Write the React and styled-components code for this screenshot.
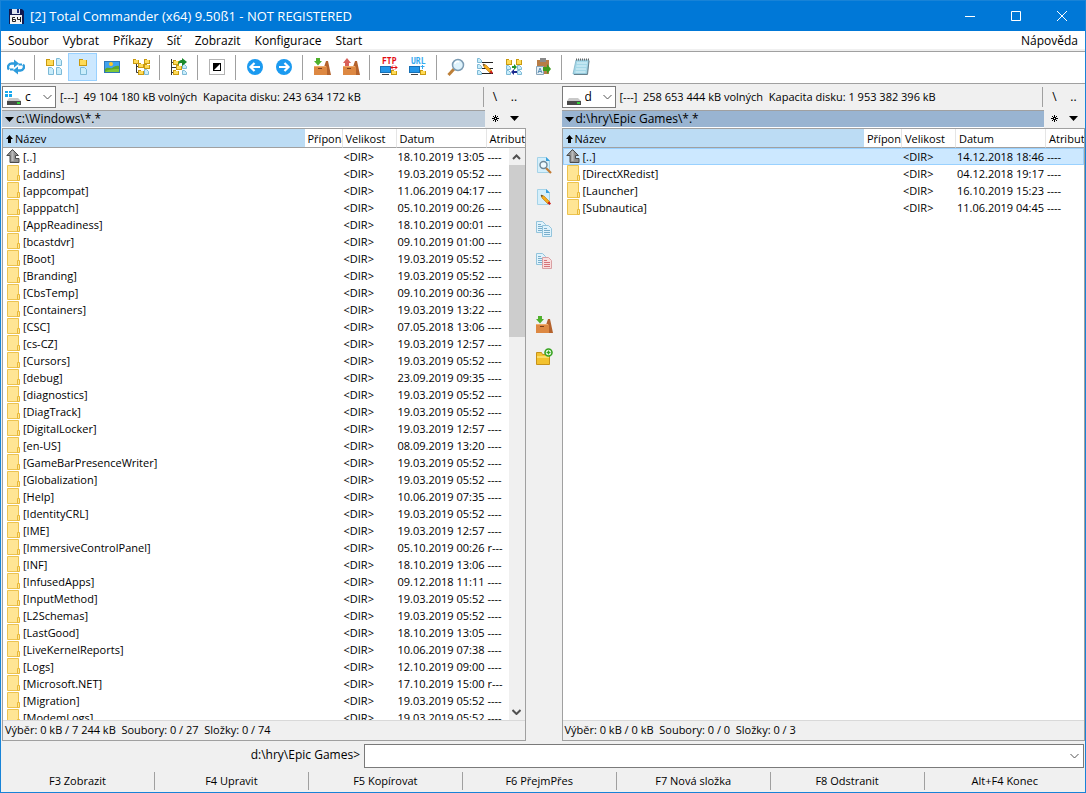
import React from "react";
import styled, { createGlobalStyle, css } from "styled-components";

const c = {
  accent: "#0078d7",
  frame: "#1883d7",
  face: "#f0f0f0",
  line: "#a0a0a0",
  soft: "#d9d9d9",
  head: "#bcdcf4",
  pick: "#cce8ff",
  pickLine: "#99d1ff",
};

const GlobalStyle = createGlobalStyle`
  *, *::before, *::after { box-sizing: border-box; }
  body {
    margin: 0;
    background: ${c.face};
    color: #000;
    font: 11px/16px "Open Sans", "Noto Sans", sans-serif;
  }
  button, input, select {
    font: inherit;
    color: inherit;
    margin: 0;
    padding: 0;
    border: 0;
    background: none;
    border-radius: 0;
  }
  svg { display: block; flex: none; }
`;

const Window = styled.div`
  height: 100vh;
  min-height: 400px;
  display: flex;
  flex-direction: column;
  border: 1px solid ${c.frame};
  overflow: hidden;
`;

/* Title bar */
const TitleBar = styled.header`
  flex: none;
  height: 30px;
  display: flex;
  align-items: center;
  gap: 5px;
  padding-left: 7px;
  background: ${c.accent};
  color: #fff;
`;
const Title = styled.h1`
  flex: 1;
  margin: 0;
  font-size: 13px;
  line-height: 16px;
  font-weight: 400;
  white-space: nowrap;
`;
const Captions = styled.div`
  display: flex;
`;
const CaptionButton = styled.button`
  width: 46px;
  height: 30px;
  display: grid;
  place-items: center;
`;

/* Menu */
const MenuBar = styled.nav`
  flex: none;
  height: 20px;
  display: flex;
  background: #fff;
  border-bottom: 2px solid ${c.face};
`;
const MenuItem = styled.button`
  padding: 2px 7px 0;
  font-size: 12px;
  line-height: 16px;
  margin-left: ${(p) => (p.$end ? "auto" : 0)};
`;

/* Toolbar */
const Toolbar = styled.div`
  flex: none;
  display: flex;
  padding: 1px 0 2px;
  background: #fff;
  border-top: 1px solid ${c.line};
  border-bottom: 1px solid ${c.line};
`;
const ToolButton = styled.button`
  width: 29px;
  height: 28px;
  display: grid;
  place-items: center;
  ${(p) =>
    p.$active &&
    css`
      background: ${c.pick};
      border: 1px solid ${c.pickLine};
    `}
`;
const ToolSeparator = styled.span`
  width: 1px;
  margin: 2px 4px 1px;
  background: ${c.line};
`;

/* Panels */
const Main = styled.main`
  flex: 1;
  min-height: 0;
  display: grid;
  grid-template-columns: minmax(0, 1fr) 36px minmax(0, 1fr);
  padding-left: 1px;
`;
const Panel = styled.section`
  display: flex;
  flex-direction: column;
  min-width: 0;
  min-height: 0;
`;
const DriveRow = styled.div`
  flex: none;
  height: 26px;
  display: flex;
  align-items: center;
`;
const DriveBox = styled.label`
  position: relative;
  flex: none;
  width: 54px;
  height: 22px;
  background: #fff;
  border: 1px solid #7a7a7a;
`;
const DriveSelect = styled.select`
  appearance: none;
  width: 100%;
  height: 20px;
  padding-left: 22px;
  font-size: 12px;
  outline: 0;
`;
const DriveGlyph = styled.span`
  position: absolute;
  top: 3px;
  left: 2px;
  pointer-events: none;
`;
const DriveChevron = styled.span`
  position: absolute;
  top: 7px;
  right: 3px;
  pointer-events: none;
`;
const DriveInfo = styled.span`
  flex: 1;
  min-width: 0;
  padding-left: 4px;
  overflow: hidden;
  white-space: pre;
`;
const SideButtons = styled.div`
  flex: none;
  width: ${(p) => (p.$ruled ? "43px" : "41px")};
  height: ${(p) => (p.$ruled ? "20px" : "16px")};
  margin-left: ${(p) => (p.$ruled ? "-2px" : 0)};
  padding-left: ${(p) => (p.$ruled ? "2px" : "1px")};
  border-left: ${(p) => (p.$ruled ? `1px solid ${c.line}` : "0")};
  display: flex;
`;
const SideButton = styled.button`
  width: 19px;
  display: grid;
  place-items: center;
  font-size: 12px;
`;
const PathRow = styled.div`
  flex: none;
  display: flex;
  height: 18px;
`;
const PathBar = styled.button`
  flex: 1;
  min-width: 0;
  display: flex;
  align-items: center;
  gap: 2px;
  padding-left: 3px;
  background: ${(p) => (p.$active ? "#99b4d1" : "#bfcddb")};
  border-top: 1px solid ${c.line};
  border-bottom: 1px solid #fff;
  font-size: 12px;
  line-height: 16px;
  white-space: nowrap;
`;
const ListFrame = styled.div`
  flex: 1;
  min-height: 0;
  display: flex;
  flex-direction: column;
  border: 1px solid ${c.line};
  background: #fff;
`;
const ListArea = styled.div`
  position: relative;
  flex: 1;
  min-height: 0;
  overflow: hidden;
`;
const Table = styled.table`
  width: 100%;
  table-layout: fixed;
  border-collapse: separate;
  border-spacing: 0;
`;
const Col = styled.col`
  width: ${(p) => p.$w || "auto"};
`;
const HeadCell = styled.th`
  height: 19px;
  padding: 2px 0 0 3px;
  overflow: hidden;
  line-height: 16px;
  font-weight: 400;
  text-align: left;
  white-space: nowrap;
  background: ${(p) => (p.$sorted ? c.head : "#fff")};
  border-bottom: 1px solid ${c.line};
  border-right: ${(p) => (p.$plain ? "0" : "1px solid #e5e5e5")};
`;
const HeadLabel = styled.span`
  display: flex;
  align-items: center;
  gap: 2px;
`;
const Row = styled.tr`
  ${(p) =>
    p.$selected &&
    css`
      background: ${c.pick};
      outline: 1px solid ${c.pickLine};
      outline-offset: -1px;
    `}
`;
const Cell = styled.td`
  height: 17px;
  padding: 0 0 0 1px;
  line-height: 17px;
  white-space: nowrap;
`;
const NameCell = styled(Cell)`
  padding-left: 3px;
  overflow: hidden;
`;
const FileName = styled.span`
  display: flex;
  align-items: center;
  gap: 3px;
  height: 17px;
`;
const ScrollBar = styled.div`
  position: absolute;
  top: 19px;
  right: 0;
  bottom: 0;
  width: 16px;
  display: flex;
  flex-direction: column;
  background: ${c.face};
`;
const ScrollButton = styled.button`
  flex: none;
  height: 17px;
  display: grid;
  place-items: center;
`;
const ScrollTrack = styled.div`
  flex: 1;
`;
const ScrollThumb = styled.div`
  height: 32%;
  background: #cdcdcd;
`;
const StatusLine = styled.div`
  flex: none;
  height: 20px;
  padding-left: 2px;
  overflow: hidden;
  background: ${c.face};
  border-top: 1px solid ${c.soft};
  line-height: 18px;
  white-space: pre;
`;

/* Middle button strip */
const Strip = styled.div`
  display: flex;
  flex-direction: column;
  align-items: center;
  padding-top: 65px;
`;
const StripButton = styled.button`
  width: 32px;
  height: 32px;
  display: grid;
  place-items: center;
  margin-top: ${(p) => (p.$gap ? "32px" : 0)};
`;

/* Command line and function keys */
const CommandRow = styled.div`
  flex: none;
  height: 29px;
  display: grid;
  grid-template-columns: 1fr 2fr;
  padding: 3px 1px 2px 3px;
`;
const CommandLabel = styled.label`
  padding-right: 4px;
  text-align: right;
  font-size: 12px;
  line-height: 22px;
`;
const CommandBox = styled.div`
  display: flex;
  background: #fff;
  border: 1px solid #7a7a7a;
`;
const CommandInput = styled.input`
  flex: 1;
  min-width: 0;
  padding: 0 4px;
  outline: 0;
`;
const CommandDrop = styled.button`
  width: 17px;
  display: grid;
  place-items: center;
`;
const KeyRow = styled.footer`
  flex: none;
  height: 22px;
  display: flex;
  padding: 2px 0;
`;
const KeyButton = styled.button`
  flex: 0 0 14.2%;
  border-right: 1px solid ${c.line};
  line-height: 18px;
  &:last-child {
    flex: 1;
    border-right: 0;
  }
`;

/* Drawings */
const Icon = ({ s = 18, children, ...rest }) => (
  <svg width={s} height={s} viewBox={`0 0 ${s} ${s}`} fill="none" aria-hidden="true" {...rest}>
    {children}
  </svg>
);
const MiniFolder = ({ x, y, w = 6, h = 5 }) => (
  <g>
    <path d={`M${x} ${y}h${w / 2}v1h${w / 2}v${h - 1}h-${w}z`} fill="#c99a10" />
    <rect x={x + 1} y={y + 1} width={w - 2} height={h - 2} fill="#ffdb57" />
  </g>
);
const MiniPage = ({ x, y, w = 6, h = 8 }) => (
  <path
    d={`M${x + 0.5} ${y + 0.5}h${w - 3}l2 2v${h - 3}h-${w - 1}z`}
    fill="#c9edfb"
    stroke="#7db9d6"
  />
);
const Floppy = () => (
  <Icon s={17}>
    <path d="M1 1h13l2 2v13H1z" fill="#111b52" />
    <path d="M4 1h8v5H4z" fill="#dfe6ef" />
    <path d="M9 1h2v4H9z" fill="#1c2b78" />
    <path d="M2 7h12v9H2z" fill="#f3f3f3" />
    <path d="M7 9.500H4.500v4h3v-2h-3M9.500 9v2.500h3M12.500 9v5" stroke="#222" />
  </Icon>
);
const Refresh = () => (
  <Icon>
    <path d="M8 5.500H5a3.600 3.600 0 0 0-3 6M10 12.500h3a3.600 3.600 0 0 0 3-6" stroke="#2d9bdc" strokeWidth="2.400" />
    <path d="M7 1.500l5 4-5 4zM11 8.500l-5 4 5 4z" fill="#2d9bdc" />
    <path d="M3 11.500h3.500M11.500 6.500H15" stroke="#2d9bdc" strokeWidth="2" />
  </Icon>
);
const Brief = () => (
  <Icon>
    <MiniFolder x={1} y={1} w={8} h={7} />
    <MiniPage x={11} y={0} />
    <MiniPage x={3} y={9} />
    <MiniPage x={11} y={9} />
  </Icon>
);
const Full = () => (
  <Icon>
    <MiniFolder x={5} y={1} w={8} h={7} />
    <MiniPage x={6} y={9} w={7} />
  </Icon>
);
const Picture = () => (
  <Icon>
    <rect x="1.500" y="3.500" width="15" height="11" fill="#3fa3ef" stroke="#2e78b8" />
    <circle cx="8" cy="6" r="2" fill="#ffc928" />
    <path d="M2 11c3-3 5 0 7-1s4-3 7-2v6H2z" fill="#5aa82a" />
    <path d="M2 14c3-3 8-3 14-3v3z" fill="#7fc837" />
  </Icon>
);
const Tree = () => (
  <Icon>
    <path d="M4.500 5v9.500H9M5 8.500h6M10 14.500h3" stroke="#333" />
    <MiniFolder x={1} y={1} />
    <MiniFolder x={6} y={5} />
    <MiniFolder x={12} y={1} />
    <MiniFolder x={12} y={6} />
    <MiniFolder x={6} y={12} />
    <MiniPage x={12} y={11} w={5} h={6} />
  </Icon>
);
const Branch = () => (
  <Icon>
    <path d="M1.500 1v16M2 4.500h2M2 9.500h4M2 14.500h2" stroke="#333" />
    <MiniFolder x={3} y={2} />
    <MiniFolder x={6} y={7} />
    <MiniFolder x={3} y={12} />
    <MiniPage x={12} y={6} w={5} h={5} />
    <MiniPage x={12} y={12} w={5} h={5} />
    <path d="M8 7c0-4 2-5 4-5V0l5 4-5 4V5c-2 0-3 0-4 2z" fill="#1b8a2c" />
  </Icon>
);
const Invert = () => (
  <Icon>
    <rect x="1.500" y="1.500" width="15" height="15" stroke="#666" strokeDasharray="1 1" />
    <rect x="5" y="5" width="8" height="8" fill="#000" />
    <path d="M12 6v6H6z" fill="#fff" />
  </Icon>
);
const Disc = ({ back }) => (
  <Icon>
    <circle cx="9" cy="9" r="8" fill="#1b9af0" />
    <path
      d={back ? "M14 9H5M8.500 5L4.500 9l4 4" : "M4 9h9M9.500 5l4 4-4 4"}
      stroke="#fff"
      strokeWidth="2.200"
    />
  </Icon>
);
const Box = ({ up }) => (
  <Icon>
    <path d="M11 9l2-6h2l3 14h-5z" fill="#b4622c" />
    <path d="M1 8h12l1 1v8H1z" fill="#dd8842" />
    <path d="M1 8h12v1H1z" fill="#f0ab6c" />
    <path d="M5 10h4v1H5z" fill="#7b3d17" />
    {up ? (
      <path d="M3 8V5H1l4-5 4 5H7v3z" fill="#d9605a" />
    ) : (
      <path d="M3 0h4v3h2L5 7.500 1 3h2z" fill="#4fb02c" />
    )}
  </Icon>
);
const NetText = styled.text`
  font: 700 8px "DejaVu Sans Mono", "Liberation Mono", monospace;
`;
const Net = ({ label, color, children }) => (
  <Icon s={20}>
    <NetText x="3" y="7" fill={color}>
      {label}
    </NetText>
    <rect x="1.500" y="9.500" width="10" height="6" fill="#2496e8" stroke="#1770b5" />
    <path d="M3 17.500h7" stroke="#444" />
    {children}
    <MiniFolder x={12} y={13} w={6} h={5} />
  </Icon>
);
const Find = () => (
  <Icon>
    <path d="M1.500 17L7 11" stroke="#bd7f37" strokeWidth="3" />
    <circle cx="11" cy="7" r="5.500" fill="#dff3fc" stroke="#7b9bb3" strokeWidth="1.500" />
    <path d="M8 6c0-2 2-3 4-2" stroke="#fff" strokeWidth="1.500" />
  </Icon>
);
const Pencil = ({ x = 0, y = 0 }) => (
  <g transform={`translate(${x} ${y})`}>
    <path d="M0 0l3 1 6 6-2 2-6-6z" fill="#f6ad1b" stroke="#b4710f" strokeWidth=".6" />
    <path d="M0 0l2 .7L.7 2z" fill="#333" />
    <path d="M8 6.500l2 2-1.500 1.500-2-2z" fill="#cc1c1c" />
  </g>
);
const Rename = () => (
  <Icon>
    <path d="M6 4.500h11M6 10.500h11M6 15.500h11" stroke="#222" />
    <MiniPage x={1} y={0} w={5} h={5} />
    <MiniPage x={1} y={6} w={5} h={5} />
    <MiniPage x={1} y={12} w={5} h={5} />
    <Pencil x={7} y={6} />
  </Icon>
);
const Sync = () => (
  <Icon>
    <MiniFolder x={1} y={1} w={6} h={6} />
    <MiniFolder x={11} y={1} w={6} h={6} />
    <MiniPage x={1} y={7} w={5} h={5} />
    <MiniPage x={1} y={12} w={5} h={5} />
    <MiniPage x={12} y={7} w={5} h={5} />
    <MiniPage x={12} y={12} w={5} h={5} />
    <path d="M7 8h2V6l3 3-3 3v-2H7z" fill="#23962a" />
    <path d="M12 13H9v-2l-3 3 3 3v-2h3z" fill="#1d2b8f" />
  </Icon>
);
const Clip = () => (
  <Icon>
    <rect x="3" y="2" width="12" height="14" fill="#b77c45" />
    <rect x="6" y="0" width="6" height="4" fill="#8a8a8a" />
    <path d="M2.500 8.500h7v8h-7z" fill="#e5eff6" stroke="#88a5ba" />
    <path d="M4 15l2-5 2 5M4.500 13.500h3" stroke="#5a8fb5" />
    <path d="M9 9h4V6l4 5-4 5v-3H9z" fill="#3e9b1d" />
  </Icon>
);
const Notepad = () => (
  <Icon>
    <path d="M4 2h13l-2 14H1z" fill="#a5d8e8" stroke="#7fb3c6" strokeWidth=".8" />
    <path d="M5 5h10M4.500 8h10M4 11h10M3.500 14h10" stroke="#dff4fa" />
    <path d="M4 1.500h13" stroke="#666" strokeDasharray="1 1" strokeWidth="2" />
    <path d="M17 3l-1.500 13.500H2" stroke="#66808c" />
  </Icon>
);
const Sheet = ({ x = 0, y = 0, red }) => (
  <g transform={`translate(${x} ${y})`}>
    <path
      d="M.5.5h6l3 3v8h-9z"
      fill={red ? "#f9dede" : "#e0f3fc"}
      stroke={red ? "#d9a0a3" : "#93c4dc"}
    />
    <path d="M2 3.500h3M2 5.500h6M2 7.500h6M2 9.500h6" stroke={red ? "#d4747a" : "#79aecb"} />
  </g>
);
const BlankDoc = () => (
  <>
    <path d="M2.500 1.500h9l3 3v12h-12z" fill="#d5effb" stroke="#a5d3e8" />
    <path d="M11 1l4 4h-4z" fill="#3aa0dc" />
  </>
);
const View = () => (
  <Icon>
    <BlankDoc />
    <path d="M11 12l5 5" stroke="#c27a33" strokeWidth="2.200" />
    <circle cx="8.500" cy="9" r="3.500" fill="#eefaff" stroke="#6d8798" strokeWidth="1.400" />
  </Icon>
);
const Edit = () => (
  <Icon>
    <BlankDoc />
    <Pencil x={6} y={7} />
  </Icon>
);
const Copy = ({ red }) => (
  <Icon>
    <Sheet x={1} y={1} />
    <Sheet x={7} y={5} red={red} />
  </Icon>
);
const NewFolder = () => (
  <Icon>
    <path d="M1.500 4.500h5l1 2h7v10h-13z" fill="#f3c22f" stroke="#c7921a" />
    <path d="M2 8h12v2H2z" fill="#fbdc68" />
    <circle cx="13.500" cy="4.500" r="3.500" fill="#fff" stroke="#35a31e" strokeWidth="1.600" />
    <path d="M13.500 2.500v4M11.500 4.500h4" stroke="#35a31e" strokeWidth="1.400" />
  </Icon>
);
const FolderIcon = () => (
  <svg width="14" height="17" viewBox="0 0 14 17" aria-hidden="true">
    <path d="M1.500.5h11v15h-11z" fill="#ffe594" stroke="#ecc34f" />
    <path d="M11.500 10.500h2v5h-2z" fill="#ffe594" stroke="#e8b93a" />
  </svg>
);
const UpIcon = () => (
  <svg width="14" height="17" viewBox="0 0 14 17" aria-hidden="true">
    <path
      d="M6.500 1.500l6 6h-3v3h3.500v4h-9v-7H.8z"
      fill="#919191"
      stroke="#4a4a4a"
      strokeLinejoin="round"
    />
    <path d="M6.500 3v10" stroke="#bcbcbc" strokeWidth="2" />
  </svg>
);
const DriveIcon = ({ system }) => (
  <Icon s={17}>
    <path d="M4 8h9l3 3H2z" fill="#c9c9c9" />
    <path d="M2 11h14v4H2z" fill="#494949" />
    <path d="M12 12h3v2h-3z" fill="#32d03a" />
    {system && (
      <path d="M0 1h3v2H0zM4 1h3v2H4zM0 4h3v3H0zM4 4h3v3H4z" fill="#17a8ee" />
    )}
  </Icon>
);
const Chevron = ({ up, bold }) => (
  <svg width="9" height="6" viewBox="0 0 9 6" fill="none" aria-hidden="true">
    <path
      d={up ? "M1 5l3.500-3.500L8 5" : "M.5 1l4 4 4-4"}
      stroke={bold ? "#505050" : "#555"}
      strokeWidth={bold ? 2 : 1}
    />
  </svg>
);
const Triangle = () => (
  <svg width="9" height="5" viewBox="0 0 9 5" aria-hidden="true">
    <path d="M0 0h9L4.500 5z" fill="#000" />
  </svg>
);
const Star = () => (
  <svg width="7" height="7" viewBox="0 0 7 7" aria-hidden="true">
    <path d="M3.500 0v7M0 3.500h7M1 1l5 5M6 1L1 6" stroke="#000" />
    <rect x="3" y="3" width="1" height="1" fill="#fff" />
  </svg>
);
const SortArrow = () => (
  <svg width="7" height="8" viewBox="0 0 7 8" aria-hidden="true">
    <path d="M3.500 0L7 4H5v4H2V4H0z" fill="#000" />
  </svg>
);

/* Data */
const menus = ["Soubor", "Vybrat", "Příkazy", "Síť", "Zobrazit", "Konfigurace", "Start"];

const tools = [
  ["Obnovit", <Refresh />],
  null,
  ["Stručný", <Brief />],
  ["Úplný", <Full />, true],
  ["Náhledy", <Picture />],
  ["Strom", <Tree />],
  null,
  ["Větev", <Branch />],
  null,
  ["Invertovat výběr", <Invert />],
  null,
  ["Zpět", <Disc back />],
  ["Vpřed", <Disc />],
  null,
  ["Zabalit", <Box />],
  ["Rozbalit", <Box up />],
  null,
  [
    "FTP připojení",
    <Net label="FTP" color="#e30b13">
      <path d="M12 10.500h6M14 8.500l-2 2 2 2M16 8.500l2 2-2 2" stroke="#e30b13" />
    </Net>,
  ],
  [
    "Nové připojení",
    <Net label="URL" color="#35a9ef">
      <path d="M14.500 8v4M12.500 9.500h4" stroke="#35a9ef" />
    </Net>,
  ],
  null,
  ["Hledat", <Find />],
  ["Hromadné přejmenování", <Rename />],
  ["Synchronizovat", <Sync />],
  ["Kopírovat názvy", <Clip />],
  null,
  ["Poznámkový blok", <Notepad />],
];

const stripTools = [
  ["Zobrazit", <View />],
  ["Upravit", <Edit />],
  ["Kopírovat", <Copy />],
  ["Přesunout", <Copy red />],
  ["Zabalit", <Box />, true],
  ["Nová složka", <NewFolder />],
];

const leftFiles = [
  ["..", "18.10.2019 13:05"],
  ["addins", "19.03.2019 05:52"],
  ["appcompat", "11.06.2019 04:17"],
  ["apppatch", "05.10.2019 00:26"],
  ["AppReadiness", "18.10.2019 00:01"],
  ["bcastdvr", "09.10.2019 01:00"],
  ["Boot", "19.03.2019 05:52"],
  ["Branding", "19.03.2019 05:52"],
  ["CbsTemp", "09.10.2019 00:36"],
  ["Containers", "19.03.2019 13:22"],
  ["CSC", "07.05.2018 13:06"],
  ["cs-CZ", "19.03.2019 12:57"],
  ["Cursors", "19.03.2019 05:52"],
  ["debug", "23.09.2019 09:35"],
  ["diagnostics", "19.03.2019 05:52"],
  ["DiagTrack", "19.03.2019 05:52"],
  ["DigitalLocker", "19.03.2019 12:57"],
  ["en-US", "08.09.2019 13:20"],
  ["GameBarPresenceWriter", "19.03.2019 05:52"],
  ["Globalization", "19.03.2019 05:52"],
  ["Help", "10.06.2019 07:35"],
  ["IdentityCRL", "19.03.2019 05:52"],
  ["IME", "19.03.2019 12:57"],
  ["ImmersiveControlPanel", "05.10.2019 00:26", "r---"],
  ["INF", "18.10.2019 13:06"],
  ["InfusedApps", "09.12.2018 11:11"],
  ["InputMethod", "19.03.2019 05:52"],
  ["L2Schemas", "19.03.2019 05:52"],
  ["LastGood", "18.10.2019 13:05"],
  ["LiveKernelReports", "10.06.2019 07:38"],
  ["Logs", "12.10.2019 09:00"],
  ["Microsoft.NET", "17.10.2019 15:00", "r---"],
  ["Migration", "19.03.2019 05:52"],
  ["ModemLogs", "19.03.2019 05:52"],
];
const rightFiles = [
  ["..", "14.12.2018 18:46"],
  ["DirectXRedist", "04.12.2018 19:17"],
  ["Launcher", "16.10.2019 15:23"],
  ["Subnautica", "11.06.2019 04:45"],
];

const keys = [
  "F3 Zobrazit",
  "F4 Upravit",
  "F5 Kopírovat",
  "F6 PřejmPřes",
  "F7 Nová složka",
  "F8 Odstranit",
  "Alt+F4 Konec",
];

function WindowButtons() {
  return (
    <Captions>
      <CaptionButton aria-label="Minimalizovat">
        <svg width="10" height="10" viewBox="0 0 10 10">
          <path d="M0 5.500h10" stroke="#fff" />
        </svg>
      </CaptionButton>
      <CaptionButton aria-label="Maximalizovat">
        <svg width="10" height="10" viewBox="0 0 10 10" fill="none">
          <path d="M.5.5h9v9h-9z" stroke="#fff" />
        </svg>
      </CaptionButton>
      <CaptionButton aria-label="Zavřít">
        <svg width="10" height="10" viewBox="0 0 10 10">
          <path d="M0 0l10 10M10 0L0 10" stroke="#fff" />
        </svg>
      </CaptionButton>
    </Captions>
  );
}

function FilePanel({ drive, info, path, files, status, active, scroll }) {
  return (
    <Panel>
      <DriveRow>
        <DriveBox>
          <DriveSelect aria-label="Disk" defaultValue={drive}>
            <option>{drive}</option>
          </DriveSelect>
          <DriveGlyph>
            <DriveIcon system={drive === "c"} />
          </DriveGlyph>
          <DriveChevron>
            <Chevron />
          </DriveChevron>
        </DriveBox>
        <DriveInfo>{info}</DriveInfo>
        <SideButtons $ruled>
          <SideButton>\</SideButton>
          <SideButton>..</SideButton>
        </SideButtons>
      </DriveRow>
      <PathRow>
        <PathBar $active={active}>
          <Triangle />
          {path}
        </PathBar>
        <SideButtons>
          <SideButton aria-label="Oblíbené">
            <Star />
          </SideButton>
          <SideButton aria-label="Historie">
            <Triangle />
          </SideButton>
        </SideButtons>
      </PathRow>
      <ListFrame>
        <ListArea>
          <Table>
            <colgroup>
              <Col />
              <Col $w="38px" />
              <Col $w="54px" />
              <Col $w="90px" />
              <Col $w="38px" />
            </colgroup>
            <thead>
              <tr>
                <HeadCell $sorted $plain>
                  <HeadLabel>
                    <SortArrow />
                    Název
                  </HeadLabel>
                </HeadCell>
                <HeadCell>Přípona</HeadCell>
                <HeadCell>Velikost</HeadCell>
                <HeadCell>Datum</HeadCell>
                <HeadCell $plain>Atributy</HeadCell>
              </tr>
            </thead>
            <tbody>
              {files.map(([name, date, attr = "----"], i) => (
                <Row key={name} $selected={active && i === 0}>
                  <NameCell>
                    <FileName>
                      {name === ".." ? <UpIcon /> : <FolderIcon />}[{name}]
                    </FileName>
                  </NameCell>
                  <Cell />
                  <Cell>&lt;DIR&gt;</Cell>
                  <Cell>{date}</Cell>
                  <Cell>{attr}</Cell>
                </Row>
              ))}
            </tbody>
          </Table>
          {scroll && (
            <ScrollBar>
              <ScrollButton aria-label="Nahoru">
                <Chevron up bold />
              </ScrollButton>
              <ScrollTrack>
                <ScrollThumb />
              </ScrollTrack>
              <ScrollButton aria-label="Dolů">
                <Chevron bold />
              </ScrollButton>
            </ScrollBar>
          )}
        </ListArea>
        <StatusLine>{status}</StatusLine>
      </ListFrame>
    </Panel>
  );
}

export default function App() {
  return (
    <>
      <GlobalStyle />
      <Window>
        <TitleBar>
          <Floppy />
          <Title>[2] Total Commander (x64) 9.50ß1 - NOT REGISTERED</Title>
          <WindowButtons />
        </TitleBar>
        <MenuBar>
          {menus.map((m) => (
            <MenuItem key={m}>{m}</MenuItem>
          ))}
          <MenuItem $end>Nápověda</MenuItem>
        </MenuBar>
        <Toolbar>
          {tools.map((t, i) =>
            t ? (
              <ToolButton key={i} aria-label={t[0]} $active={t[2]}>
                {t[1]}
              </ToolButton>
            ) : (
              <ToolSeparator key={i} />
            )
          )}
        </Toolbar>
        <Main>
          <FilePanel
            drive="c"
            info="[---]  49 104 180 kB volných  Kapacita disku: 243 634 172 kB"
            path="c:\Windows\*.*"
            files={leftFiles}
            status="Výběr: 0 kB / 7 244 kB  Soubory: 0 / 27  Složky: 0 / 74"
            scroll
          />
          <Strip>
            {stripTools.map(([label, icon, gap], i) => (
              <StripButton key={i} aria-label={label} $gap={gap}>
                {icon}
              </StripButton>
            ))}
          </Strip>
          <FilePanel
            drive="d"
            info="[---]  258 653 444 kB volných  Kapacita disku: 1 953 382 396 kB"
            path="d:\hry\Epic Games\*.*"
            files={rightFiles}
            status="Výběr: 0 kB / 0 kB  Soubory: 0 / 0  Složky: 0 / 3"
            active
          />
        </Main>
        <CommandRow>
          <CommandLabel htmlFor="command">d:\hry\Epic Games&gt;</CommandLabel>
          <CommandBox>
            <CommandInput id="command" type="text" />
            <CommandDrop aria-label="Historie příkazů">
              <Chevron />
            </CommandDrop>
          </CommandBox>
        </CommandRow>
        <KeyRow>
          {keys.map((k) => (
            <KeyButton key={k}>{k}</KeyButton>
          ))}
        </KeyRow>
      </Window>
    </>
  );
}
